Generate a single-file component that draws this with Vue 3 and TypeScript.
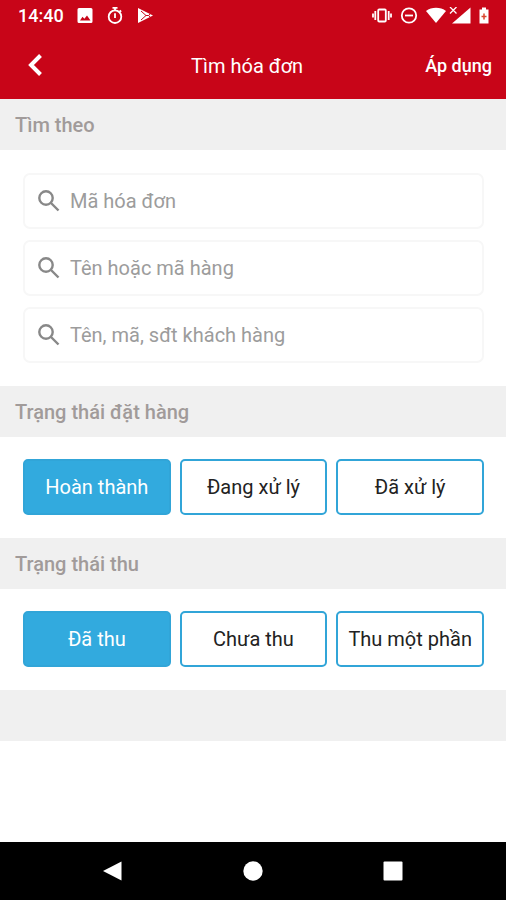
<script setup lang="ts">
import { reactive, ref } from 'vue'

interface SearchField {
  id: string
  label: string
}

interface StatusGroup {
  title: string
  options: string[]
}

const fields: SearchField[] = [
  { id: 'invoice-code', label: 'Mã hóa đơn' },
  { id: 'product', label: 'Tên hoặc mã hàng' },
  { id: 'customer', label: 'Tên, mã, sđt khách hàng' },
]

const groups: StatusGroup[] = [
  { title: 'Trạng thái đặt hàng', options: ['Hoàn thành', 'Đang xử lý', 'Đã xử lý'] },
  { title: 'Trạng thái thu', options: ['Đã thu', 'Chưa thu', 'Thu một phần'] },
]

const query = reactive<Record<string, string>>({ 'invoice-code': '', product: '', customer: '' })
const selected = ref<number[]>([0, 0])

function choose(group: number, option: number): void {
  selected.value[group] = option
}
</script>

<template>
  <div class="screen">
    <header class="top">
      <div class="status">
        <div class="status-left">
          <time class="clock">14:40</time>
          <svg class="status-icon" viewBox="0 0 18 18" aria-hidden="true">
            <path fill-rule="evenodd" d="M3 1h12a1.500 1.500 0 0 1 1.500 1.500v12a1.500 1.500 0 0 1-1.500 1.500H3a1.500 1.500 0 0 1-1.500-1.500v-12A1.500 1.500 0 0 1 3 1zM4 13.500h10.500L11 8.500l-2.600 3.300L6.500 9.800z" />
          </svg>
          <svg class="status-icon" viewBox="0 0 18 18" aria-hidden="true">
            <circle class="line" cx="9" cy="9.700" r="6.300" />
            <path class="line" d="M6.500 .9h5M9 1v2.500M9 6.200v4.800M13.700 3.400l1.400 1.400" />
          </svg>
          <svg class="status-icon" viewBox="0 0 18 18" aria-hidden="true">
            <path d="M2 1l15 7.500L2 16z" />
            <path class="cut" d="M5 4l5 4.500L5 13M10 8.500h2.500l2-1.800M12.500 8.500l2 1.800" />
          </svg>
        </div>
        <div class="status-right">
          <svg class="status-icon wide" viewBox="0 0 20 18" aria-hidden="true">
            <rect class="line" x="6.200" y="2.500" width="7.600" height="12" rx="1" />
            <path class="line" d="M3.300 4v9M16.700 4v9M1 6.500v4M19 6.500v4" />
          </svg>
          <svg class="status-icon" viewBox="0 0 18 18" aria-hidden="true">
            <circle class="line" cx="9" cy="8.500" r="7.200" />
            <path class="line" d="M5 8.500h8" />
          </svg>
          <svg class="signal" viewBox="0 0 45 18" aria-hidden="true">
            <path d="M0 4C5.500-.2 14.500-.2 20 4L10 16z" />
            <path d="M44.500 .5v16H26z" />
            <path class="thin" d="M24 0l6.500 6.500M30.500 0L24 6.500" />
          </svg>
          <svg class="battery" viewBox="0 0 10 18" aria-hidden="true">
            <path d="M3 .5h4v2h2.500v14H.5v-14H3z" />
            <path class="plus" d="M5 6.500v6M2.500 9.500h5" />
          </svg>
        </div>
      </div>
      <div class="app-bar">
        <button class="back" type="button" aria-label="Quay lại">
          <svg viewBox="0 0 14 24" aria-hidden="true"><path d="M12.500 1.500L3 11l9.500 9.500" /></svg>
        </button>
        <h1>Tìm hóa đơn</h1>
        <button class="apply" type="submit" form="filters">Áp dụng</button>
      </div>
    </header>

    <form id="filters" class="filters" @submit.prevent>
      <h2 class="band">Tìm theo</h2>
      <div class="fields">
        <label v-for="field in fields" :key="field.id" class="field" :for="field.id">
          <svg viewBox="0 0 22 22" aria-hidden="true">
            <circle cx="8" cy="8" r="6.700" />
            <path d="M13 13l7.500 7.500" />
          </svg>
          <input
            :id="field.id"
            v-model="query[field.id]"
            type="text"
            :placeholder="field.label"
            :aria-label="field.label"
          />
        </label>
      </div>

      <template v-for="(group, g) in groups" :key="group.title">
        <h2 class="band">{{ group.title }}</h2>
        <div class="options" role="group" :aria-label="group.title">
          <button
            v-for="(option, i) in group.options"
            :key="option"
            type="button"
            class="option"
            :class="{ active: selected[g] === i }"
            :aria-pressed="selected[g] === i"
            @click="choose(g, i)"
          >
            {{ option }}
          </button>
        </div>
      </template>
      <div class="band"></div>
    </form>

    <nav class="system-nav" aria-label="Điều hướng hệ thống">
      <button type="button" aria-label="Trở về">
        <svg viewBox="0 0 20 20" aria-hidden="true"><path d="M18.500 .5v19L0 10z" /></svg>
      </button>
      <button type="button" aria-label="Màn hình chính">
        <svg viewBox="0 0 20 20" aria-hidden="true"><circle cx="10" cy="10" r="9.700" /></svg>
      </button>
      <button type="button" aria-label="Ứng dụng gần đây">
        <svg viewBox="0 0 20 20" aria-hidden="true"><rect x=".5" y=".5" width="19" height="19" rx="1" /></svg>
      </button>
    </nav>
  </div>
</template>

<style>
body {
  margin: 0;
  background: #fff;
}
</style>

<style scoped>
.screen {
  display: flex;
  flex-direction: column;
  min-height: 100vh;
  background: #fff;
  font-family: Roboto, "Noto Sans", sans-serif;
  font-size: 20px;
  line-height: 24px;
}

button {
  margin: 0;
  padding: 0;
  border: 0;
  background: none;
  color: inherit;
  font: inherit;
  cursor: pointer;
}

svg {
  display: block;
  flex: none;
}

.top {
  background: #c80518;
  color: #fff;
}

.status {
  display: flex;
  align-items: center;
  justify-content: space-between;
  height: 32px;
  padding: 0 17px 0 18px;
}

.status-left,
.status-right {
  display: flex;
  align-items: center;
}

.status-left {
  gap: 12px;
}

.status-right {
  gap: 8px;
}

.clock {
  font-size: 18px;
  font-weight: 500;
}

.status svg {
  height: 18px;
  fill: #fff;
}

.status-icon {
  width: 18px;
}

.status-icon.wide {
  width: 20px;
}

.signal {
  width: 45px;
}

.battery {
  width: 10px;
}

.status .line {
  fill: none;
  stroke: #fff;
  stroke-width: 1.8;
}

.status .cut {
  fill: none;
  stroke: #c80518;
  stroke-width: 1;
}

.thin {
  stroke: #fff;
  stroke-width: 1.3;
}

.plus {
  stroke: #d9452f;
  stroke-width: 1.5;
}

.app-bar {
  display: flex;
  align-items: center;
  height: 67px;
}

.back {
  display: flex;
  justify-content: center;
  width: 69px;
  padding: 12px 0;
}

.back svg {
  width: 14px;
  height: 24px;
  fill: none;
  stroke: #fff;
  stroke-width: 4;
}

h1 {
  flex: 1;
  margin: 0;
  font-size: 20px;
  font-weight: 400;
  text-align: center;
}

.apply {
  padding: 12px 14px 12px 0;
  font-size: 18px;
  font-weight: 500;
}

.filters {
  flex: 1;
}

.band {
  box-sizing: border-box;
  height: 51px;
  margin: 0;
  padding: 14px 15px 13px;
  background: #f0f0f0;
  color: #a19b9a;
  font-size: 20px;
  font-weight: 500;
}

.fields {
  display: flex;
  flex-direction: column;
  gap: 11px;
  padding: 23px 22px 23px 23px;
}

.field {
  box-sizing: border-box;
  display: flex;
  align-items: center;
  gap: 10px;
  height: 56px;
  padding: 0 13px;
  border: 2px solid #f7f7f7;
  border-radius: 7px;
}

.field svg {
  width: 22px;
  height: 22px;
  fill: none;
  stroke: #888;
  stroke-width: 2.4;
}

.field input {
  flex: 1;
  min-width: 0;
  padding: 0;
  border: 0;
  outline: 0;
  background: none;
  color: #222;
  font: inherit;
}

.field input::placeholder {
  color: #9c9c9c;
  opacity: 1;
}

.options {
  display: grid;
  grid-template-columns: repeat(3, 1fr);
  gap: 9px;
  padding: 22px 22px 23px 23px;
}

.option {
  height: 56px;
  border: 2px solid #31a5d8;
  border-radius: 5px;
  color: #222;
  white-space: nowrap;
}

.option.active {
  background: #32aade;
  color: #fff;
}

.system-nav {
  display: flex;
  justify-content: space-between;
  height: 58px;
  padding: 0 92px;
  background: #000;
}

.system-nav button {
  display: flex;
  align-items: center;
  justify-content: center;
  width: 42px;
}

.system-nav svg {
  width: 20px;
  height: 20px;
  fill: #fff;
}
</style>
